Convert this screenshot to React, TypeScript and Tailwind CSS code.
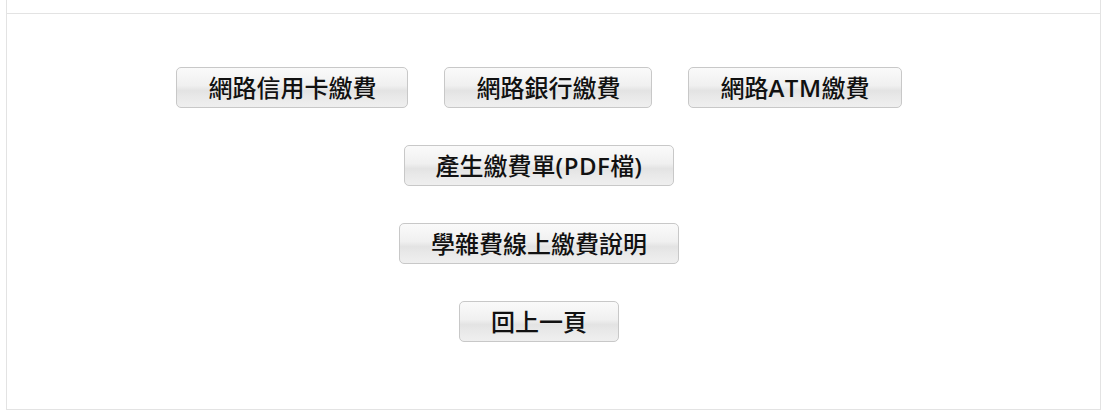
const rows: string[][] = [
  ['網路信用卡繳費', '網路銀行繳費', '網路ATM繳費'],
  ['產生繳費單(PDF檔)'],
  ['學雜費線上繳費說明'],
  ['回上一頁'],
];

function PayButton({ label }: { label: string }) {
  // latin runs look heavier than the CJK in the original, so weight them apart
  const parts = label.split(/([A-Za-z()]+)/).filter(Boolean);
  return (
    <button
      type="button"
      className="h-[41px] rounded-[5px] border border-[#c8c8c8] bg-[linear-gradient(to_bottom,#fafafa_0%,#f0f0f0_45%,#e3e3e3_58%,#e9e9e9_75%,#efefef_100%)] px-[31px] text-[24px] leading-none font-medium text-[#111] whitespace-nowrap"
    >
      {parts.map((p, i) =>
        /[A-Za-z()]/.test(p) ? (
          <span key={i} className="font-semibold tracking-[0.5px]">
            {p}
          </span>
        ) : (
          <span key={i}>{p}</span>
        )
      )}
    </button>
  );
}

export default function App() {
  return (
    <div
      className="min-h-[418px] bg-white"
      style={{ fontFamily: '"Open Sans", "Noto Sans CJK TC", sans-serif' }}
    >
      <div className="ml-[6px] h-[410px] w-[1095px] border-x border-b border-[#e3e3e3]">
        <div className="h-[14px] border-b border-[#e3e3e3]" />
        <div className="flex flex-col items-center gap-[37px] pt-[53px] pr-[29px]">
          {rows.map((row, i) => (
            <div key={i} className="flex gap-[36px]">
              {row.map((label) => (
                <PayButton key={label} label={label} />
              ))}
            </div>
          ))}
        </div>
      </div>
    </div>
  );
}
